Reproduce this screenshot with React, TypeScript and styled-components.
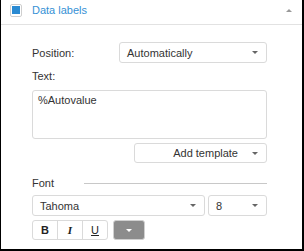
import React from 'react';
import styled, { createGlobalStyle } from 'styled-components';

const GlobalStyle = createGlobalStyle`
  body {
    margin: 0;
    font-family: "Liberation Sans", Arial, sans-serif;
    font-size: 11px;
    color: #333;
  }
`;

export default function App() {
  return (
    <>
      <GlobalStyle />
      <Frame>
        <Header>
          <Checkbox>
            <CheckMark />
          </Checkbox>
          <Title>Data labels</Title>
          <CollapseArrow />
        </Header>

        <Body>
          <FieldRow>
            <span>Position:</span>
            <Select width={148}>
              <span>Automatically</span>
              <Arrow />
            </Select>
          </FieldRow>

          <BlockLabel>Text:</BlockLabel>
          <TextBox>%Autovalue</TextBox>

          <TemplateButton>
            <span>Add template</span>
            <Arrow />
          </TemplateButton>

          <SectionRow>
            <span>Font</span>
            <SectionLine />
          </SectionRow>

          <FontRow>
            <Select width={173}>
              <span>Tahoma</span>
              <Arrow />
            </Select>
            <Select width={59}>
              <span>8</span>
              <Arrow />
            </Select>
          </FontRow>

          <StyleRow>
            <ButtonGroup>
              <StyleButton><b>B</b></StyleButton>
              <StyleButton><ItalicI>I</ItalicI></StyleButton>
              <StyleButton><u>U</u></StyleButton>
            </ButtonGroup>
            <ColorButton>
              <WhiteArrow />
            </ColorButton>
          </StyleRow>
        </Body>
      </Frame>
    </>
  );
}

const Frame = styled.div`
  width: 304px;
  height: 251px;
  box-sizing: border-box;
  background: #fff;
  border-left: 1px solid #000;
  border-right: 2px solid #000;
  border-bottom: 2px solid #000;
  display: flex;
  flex-direction: column;
`;

const Header = styled.div`
  height: 25px;
  flex-shrink: 0;
  box-sizing: border-box;
  border-bottom: 1px solid #e2e2e2;
  display: flex;
  align-items: center;
  padding: 0 10px 4px 9px;
`;

const Checkbox = styled.div`
  width: 12px;
  height: 13px;
  flex-shrink: 0;
  box-sizing: border-box;
  border: 1px solid #cfcfcf;
  border-radius: 2px;
  display: flex;
  align-items: center;
  justify-content: center;
`;

const CheckMark = styled.div`
  width: 8px;
  height: 8px;
  background: #2a8ad2;
`;

const Title = styled.span`
  margin-left: 10px;
  color: #3591d5;
  font-size: 11px;
`;

const CollapseArrow = styled.div`
  margin-left: auto;
  width: 0;
  height: 0;
  border-left: 3px solid transparent;
  border-right: 3px solid transparent;
  border-bottom: 3px solid #999;
`;

const Body = styled.div`
  display: flex;
  flex-direction: column;
  padding: 17px 35px 0 31px;
`;

const FieldRow = styled.div`
  display: flex;
  align-items: center;
  justify-content: space-between;
`;

const Select = styled.div<{ width: number }>`
  width: ${(p) => p.width}px;
  height: 21px;
  box-sizing: border-box;
  border: 1px solid #dadada;
  border-radius: 3px;
  display: flex;
  align-items: center;
  justify-content: space-between;
  padding: 0 8px 0 7px;
  color: #333;
`;

const Arrow = styled.div`
  width: 0;
  height: 0;
  border-left: 3px solid transparent;
  border-right: 3px solid transparent;
  border-top: 3px solid #666;
`;

const BlockLabel = styled.div`
  margin-top: 7px;
  line-height: 13px;
`;

const TextBox = styled.div`
  margin-top: 7px;
  height: 49px;
  box-sizing: border-box;
  border: 1px solid #dadada;
  border-radius: 3px;
  padding: 3px 5px;
`;

const TemplateButton = styled.div`
  align-self: flex-end;
  margin-top: 4px;
  width: 133px;
  height: 20px;
  box-sizing: border-box;
  border: 1px solid #dadada;
  border-radius: 3px;
  display: flex;
  align-items: center;
  justify-content: flex-end;
  gap: 14px;
  padding-right: 8px;
`;

const SectionRow = styled.div`
  margin-top: 13px;
  height: 14px;
  display: flex;
  align-items: center;
  gap: 30px;
`;

const SectionLine = styled.div`
  flex: 1;
  height: 1px;
  background: #c8c8c8;
`;

const FontRow = styled.div`
  margin-top: 5px;
  display: flex;
  justify-content: space-between;
`;

const StyleRow = styled.div`
  margin-top: 4px;
  display: flex;
  gap: 5px;
`;

const ButtonGroup = styled.div`
  display: flex;
  height: 20px;
  box-sizing: border-box;
  border: 1px solid #dadada;
  border-radius: 3px;
`;

const StyleButton = styled.div`
  width: 24px;
  display: flex;
  align-items: center;
  justify-content: center;
  color: #222;
  & + & {
    border-left: 1px solid #dadada;
  }
`;

const ItalicI = styled.span`
  font-family: "Liberation Serif", serif;
  font-style: italic;
  font-weight: bold;
`;

const ColorButton = styled.div`
  width: 32px;
  height: 20px;
  box-sizing: border-box;
  border: 1px solid #d0d0d0;
  border-radius: 3px;
  background: #8c8c8c;
  display: flex;
  align-items: center;
  justify-content: center;
`;

const WhiteArrow = styled.div`
  width: 0;
  height: 0;
  border-left: 3px solid transparent;
  border-right: 3px solid transparent;
  border-top: 3px solid #fff;
`;
